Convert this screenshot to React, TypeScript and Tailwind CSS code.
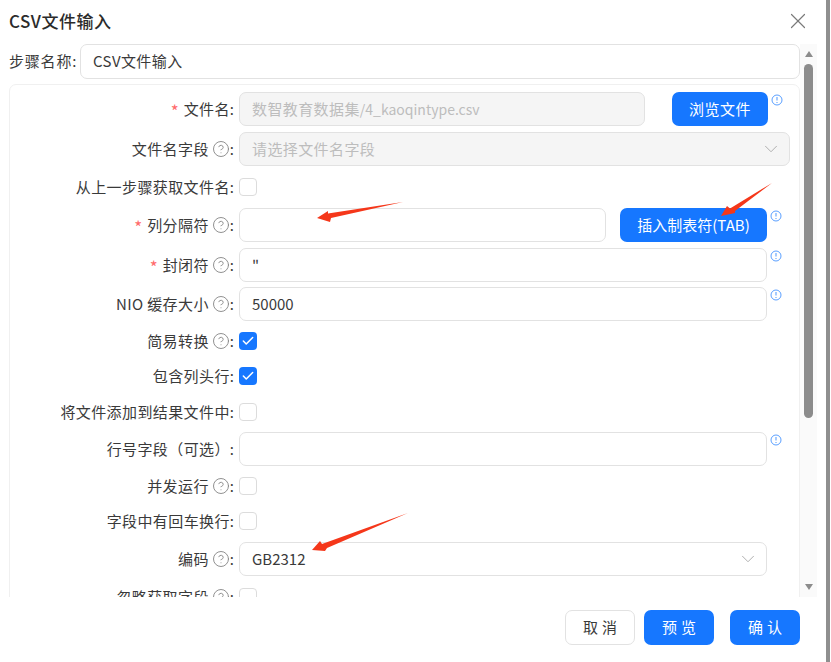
import type { ReactNode } from "react";
import { Check, ChevronDown, CircleHelp, X } from "lucide-react";

const font = { fontFamily: '"Noto Sans CJK SC", "Noto Sans", sans-serif' };

function Info() {
  return (
    <svg width="12" height="12" viewBox="0 0 12 12" className="absolute -right-[15px] top-[2px]">
      <circle cx="6" cy="6" r="5" fill="none" stroke="#1677ff" strokeOpacity="0.7" strokeWidth="1" />
      <path d="M6 3v3.6M6 8v1" stroke="#1677ff" strokeOpacity="0.7" strokeWidth="1.1" />
    </svg>
  );
}

function Label({ text, required, help }: { text: string; required?: boolean; help?: boolean }) {
  return (
    <div className="flex h-[18px] w-[224px] shrink-0 items-center justify-end whitespace-nowrap text-[15px] text-[#3a3a3a]">
      {required && <span className="mr-[5px] mt-[3px] text-[17px] text-[#ff6b6b]">*</span>}
      <span className="tracking-[0.4px]">{text}</span>
      {help && <CircleHelp size={18} strokeWidth={1.2} className="ml-[3px] text-[#858585]" />}
      <span>:</span>
    </div>
  );
}

function Field({ children, disabled, className }: { children?: ReactNode; disabled?: boolean; className: string }) {
  return (
    <div
      className={`flex h-[34px] items-center justify-between rounded-[7px] border border-[#e2e2e2] px-3 text-[15px] ${
        disabled ? "bg-[#f5f5f5] text-[#bdbdbd]" : "bg-white text-[#3a3a3a]"
      } ${className}`}
    >
      {children}
    </div>
  );
}

function Checkbox({ checked }: { checked?: boolean }) {
  return checked ? (
    <span className="flex h-[18px] w-[18px] items-center justify-center rounded-[4px] bg-[#1677ff]">
      <Check size={14} strokeWidth={2.6} className="text-white" />
    </span>
  ) : (
    <span className="h-[18px] w-[18px] rounded-[4px] border border-[#dcdcdc] bg-white" />
  );
}

function Row({ children, className }: { children: ReactNode; className: string }) {
  return <div className={`flex items-center gap-[5px] ${className}`}>{children}</div>;
}

function BlueButton({ children, className }: { children: ReactNode; className: string }) {
  return (
    <button className={`relative h-[34px] rounded-[7px] bg-[#1677ff] text-[15px] text-white ${className}`}>
      {children}
    </button>
  );
}

export default function App() {
  return (
    <div className="relative h-[662px] w-[831px] overflow-hidden bg-white" style={font}>
      <div className="h-[662px] w-[830px] bg-[#8f8f8f]">
        <div className="flex h-[662px] w-[826px] flex-col bg-white">
          {/* Header */}
          <div className="flex h-[44px] shrink-0 items-center justify-between pb-[2px] pl-[9px] pr-[15px]">
            <h2 className="text-[17px] font-medium tracking-[0.5px] text-[#2b2b2b]">CSV文件输入</h2>
            <X size={26} strokeWidth={1.1} className="text-[#7a7a7a]" />
          </div>

          {/* Body */}
          <div className="flex h-[553px] shrink-0">
            <div className="w-[800px] shrink-0 overflow-hidden pl-[9px]">
              <div className="flex items-center">
                <span className="w-[71px] shrink-0 whitespace-nowrap text-[15px] tracking-[0.8px] text-[#3a3a3a]">步骤名称:</span>
                <Field className="h-[35px] w-[720px] tracking-[0.4px]">CSV文件输入</Field>
              </div>

              <div className="mt-[5px] h-[600px] w-[791px] rounded-[7px] border border-[#f0f0f0] pt-[7px]">
                <Row className="">
                  <Label text="文件名" required />
                  <Field disabled className="w-[406px]">
                    <span className="whitespace-nowrap">
                      <span className="tracking-[0.4px]">数智教育数据集</span>
                      <span className="text-[14px]">/4_kaoqintype.csv</span>
                    </span>
                  </Field>
                  <BlueButton className="ml-[22px] w-[96px] tracking-[0.5px]">
                    浏览文件
                    <Info />
                  </BlueButton>
                </Row>
                <Row className="mt-[6px]">
                  <Label text="文件名字段" help />
                  <Field disabled className="w-[551px] tracking-[0.4px]">
                    请选择文件名字段
                    <ChevronDown size={22} strokeWidth={1} className="-mr-[5px] text-[#a8a8a8]" />
                  </Field>
                </Row>
                <Row className="mt-[12px]">
                  <Label text="从上一步骤获取文件名" />
                  <Checkbox />
                </Row>
                <Row className="mt-[12px]">
                  <Label text="列分隔符" required help />
                  <Field className="w-[367px]" />
                  <BlueButton className="ml-[9px] w-[147px]">
                    插入制表符(TAB)
                    <Info />
                  </BlueButton>
                </Row>
                <Row className="mt-[6px]">
                  <Label text="封闭符" required help />
                  <div className="relative">
                    <Field className="w-[528px]">"</Field>
                    <Info />
                  </div>
                </Row>
                <Row className="mt-[5px]">
                  <Label text="NIO 缓存大小" help />
                  <div className="relative">
                    <Field className="w-[528px]">50000</Field>
                    <Info />
                  </div>
                </Row>
                <Row className="mt-[11px]">
                  <Label text="简易转换" help />
                  <Checkbox checked />
                </Row>
                <Row className="mt-[17px]">
                  <Label text="包含列头行" />
                  <Checkbox checked />
                </Row>
                <Row className="mt-[18px]">
                  <Label text="将文件添加到结果文件中" />
                  <Checkbox />
                </Row>
                <Row className="mt-[11px]">
                  <Label text="行号字段（可选）" />
                  <div className="relative">
                    <Field className="w-[528px]" />
                    <Info />
                  </div>
                </Row>
                <Row className="mt-[11px]">
                  <Label text="并发运行" help />
                  <Checkbox />
                </Row>
                <Row className="mt-[17px]">
                  <Label text="字段中有回车换行" />
                  <Checkbox />
                </Row>
                <Row className="mt-[12px]">
                  <Label text="编码" help />
                  <Field className="w-[528px]">
                    GB2312
                    <ChevronDown size={22} strokeWidth={1} className="-mr-[5px] text-[#a8a8a8]" />
                  </Field>
                </Row>
                <Row className="mt-[12px]">
                  <Label text="忽略获取字段" help />
                  <Checkbox />
                </Row>
              </div>
            </div>

            {/* Scrollbar */}
            <div className="flex w-[17px] shrink-0 flex-col items-center bg-[#fafafa] pt-[7px]">
              <span className="h-0 w-0 border-x-[4px] border-b-[6px] border-x-transparent border-b-[#8c8c8c]" />
              <span className="mt-[7px] h-[354px] w-[9px] rounded-full bg-[#8c8c8c]" />
              <span className="mt-auto mb-[7px] h-0 w-0 border-x-[4px] border-t-[6px] border-x-transparent border-t-[#8c8c8c]" />
            </div>
          </div>

          {/* Footer */}
          <div className="mt-[13px] flex justify-end pr-[26px] text-[15px]">
            <button className="h-[35px] w-[70px] rounded-[7px] border border-[#e2e2e2] bg-white pl-[4px] tracking-[4px] text-[#3a3a3a]">取消</button>
            <button className="ml-[9px] h-[35px] w-[70px] rounded-[7px] bg-[#1677ff] pl-[4px] tracking-[4px] text-white">预览</button>
            <button className="ml-[16px] h-[35px] w-[70px] rounded-[7px] bg-[#1677ff] pl-[4px] tracking-[4px] text-white">确认</button>
          </div>
        </div>
      </div>

      {/* Red annotation arrows */}
      <svg width="831" height="662" className="pointer-events-none absolute left-0 top-0">
        <polygon points="317,218 328,211 328,213.5 403,202 331,218 330,222" fill="#f5371a" />
        <polygon points="721,216 727,206 730,208.5 772,183 735,211 735,213" fill="#f5371a" />
        <polygon points="312,550 320,541 322,544 408,513 327,548 325,551" fill="#f5371a" />
      </svg>
    </div>
  );
}
